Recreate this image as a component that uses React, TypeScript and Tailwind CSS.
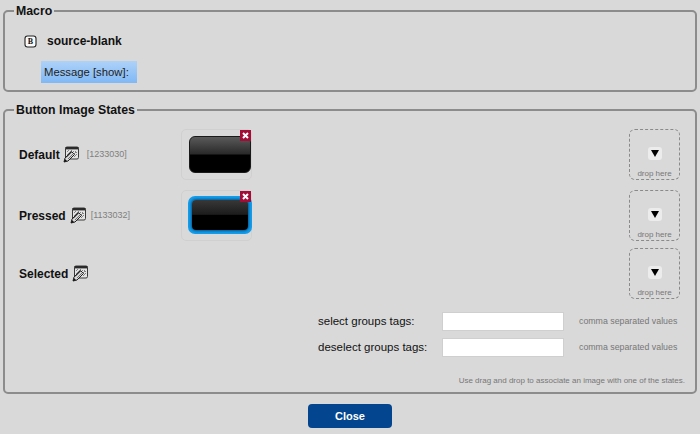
function EditIcon() {
  return (
    <svg width="16" height="17" viewBox="0 0 16 17" className="shrink-0">
      <rect x="2.5" y="1" width="13" height="12" rx="1.5" fill="#e4e4e4" stroke="#3a3a3a" strokeWidth="1" />
      <rect x="2.5" y="1" width="13" height="2.4" fill="#2a2a2a" />
      <path d="M4 6l2-2M4 9l5-5M6 10l5-5M8 11l5-5M11 11l3-3M12 5l2 2" stroke="#777" strokeWidth="0.9" fill="none" />
      <path d="M1 16l1-4 6.5-6.5 3 3L5 15z" fill="#d8d8d8" stroke="#222" strokeWidth="1" />
      <path d="M1 16l1-3 2 2z" fill="#111" />
      <path d="M3.5 11.5l5.5-5.5M5 13l5.5-5.5" stroke="#555" strokeWidth="0.8" />
    </svg>
  );
}

function BIcon() {
  return (
    <svg width="13" height="13" viewBox="0 0 13 13">
      <rect x="1" y="1" width="11" height="11" rx="2.5" fill="#fafafa" stroke="#222" strokeWidth="1.1" />
      <text x="6.5" y="9.4" textAnchor="middle" fontSize="8" fontWeight="700" fontFamily="Liberation Serif, serif" fill="#111">B</text>
    </svg>
  );
}

function Thumb({ pressed }: { pressed?: boolean }) {
  return (
    <div className="relative w-[71px] h-[51px] rounded-[5px] border border-[#d0d0d0]">
      {pressed ? (
        <div className="absolute left-[6px] top-[5px] w-[64px] h-[38px] rounded-[7px] bg-[#12a0f0] p-[4px]">
          <div className="w-full h-full rounded-[4px] shadow-[0_0_3px_1px_#0a4f80] bg-[linear-gradient(#383838,#1c1c1c_48%,#000_50%,#000)]" />
        </div>
      ) : (
        <div className="absolute left-[7px] top-[6px] w-[62px] h-[37px] rounded-[6px] border border-[#1a1a1a] bg-[linear-gradient(#5a5a5a,#2a2a2a_48%,#000_52%,#000)]" />
      )}
      <div className="absolute right-[0px] top-[0px] w-[11px] h-[11px] bg-[#a30d35] flex items-center justify-center">
        <svg width="7" height="7" viewBox="0 0 7 7">
          <path d="M1 1l5 5M6 1l-5 5" stroke="#fff" strokeWidth="2" />
        </svg>
      </div>
    </div>
  );
}

function Drop() {
  return (
    <div className="w-[51px] h-[51px] rounded-[6px] border border-dashed border-[#8a8a8a] flex flex-col items-center">
      <div className="mt-[17px] w-[14px] h-[14px] rounded-[3px] bg-[#ececec] flex items-center justify-center">
        <svg width="8" height="7" viewBox="0 0 8 7">
          <path d="M0 0h8L4 7z" fill="#000" />
        </svg>
      </div>
      <span className="mt-[9px] text-[8px] leading-[10px] text-[#777]">drop here</span>
    </div>
  );
}

function Row({ label, id, thumb, mb, pressed, gap, idGap }: { label: string; id?: string; thumb?: boolean; mb: string; pressed?: boolean; gap: string; idGap?: string }) {
  return (
    <div className={`flex items-center h-[51px] pr-[15px] ${mb}`}>
      <div className={`w-[176px] pl-[14px] flex items-center ${gap}`}>
        <span className="font-bold text-[12px] text-[#111]">{label}</span>
        <EditIcon />
        {id && <span className={`text-[9px] text-[#808080] ${idGap}`}>{id}</span>}
      </div>
      {thumb && <Thumb pressed={pressed} />}
      <div className="ml-auto">
        <Drop />
      </div>
    </div>
  );
}

function TagRow({ label }: { label: string }) {
  return (
    <div className="flex items-center h-[19px] pl-[313px]">
      <span className="w-[124px] text-[11.5px] text-[#111]">{label}</span>
      <div className="w-[122px] h-[19px] bg-white border border-[#cfcfcf]" />
      <span className="ml-[15px] text-[8.8px] text-[#777]">comma separated values</span>
    </div>
  );
}

export default function App() {
  return (
    <div className="w-[700px] h-[434px] bg-[#d9d9d9] overflow-hidden px-[3px] font-['Liberation_Sans',Arial,sans-serif]">
      <fieldset className="h-[87px] mt-[5px] border-2 border-[#8c8c8c] rounded-[5px] min-w-0 m-0 p-0">
        <legend className="ml-[9px] px-[2px] font-bold text-[12.3px] leading-[12px] text-[#111]">Macro</legend>
        <div className="flex items-center h-[20px] mt-[14px] pl-[19px]">
          <BIcon />
          <span className="ml-[10px] font-bold text-[12px] text-[#111]">source-blank</span>
        </div>
        <div className="ml-[36px] mt-[10px] w-[96px] h-[22px] flex items-center pl-[3px] text-[11.3px] text-[#222] bg-[linear-gradient(#aed2f8,#80b8f5)]">
          Message [show]:
        </div>
      </fieldset>

      <fieldset className="h-[290px] mt-[12px] border-2 border-[#8c8c8c] rounded-[5px] min-w-0 m-0 p-0">
        <legend className="ml-[9px] px-[2px] font-bold text-[12.3px] leading-[12px] text-[#111]">Button Image States</legend>
        <div className="mt-[13px]">
          <Row label="Default" id="[1233030]" thumb mb="mb-[10px]" gap="gap-[3px]" idGap="ml-[5px]" />
          <Row label="Pressed" id="[1133032]" thumb pressed mb="mb-[7px]" gap="gap-[4px]" idGap="ml-[1px]" />
          <Row label="Selected" mb="mb-[13px]" gap="gap-[4px]" />
        </div>
        <div className="flex flex-col gap-[7px]">
          <TagRow label="select groups tags:" />
          <TagRow label="deselect groups tags:" />
        </div>
        <p className="mt-[19px] pr-[10px] text-right text-[8px] leading-[10px] text-[#777]">
          Use drag and drop to associate an image with one of the states.
        </p>
      </fieldset>

      <div className="flex justify-center mt-[10px]">
        <button className="w-[84px] h-[24px] rounded-[4px] bg-[#03468f] text-white font-bold text-[11px]">Close</button>
      </div>
    </div>
  );
}
